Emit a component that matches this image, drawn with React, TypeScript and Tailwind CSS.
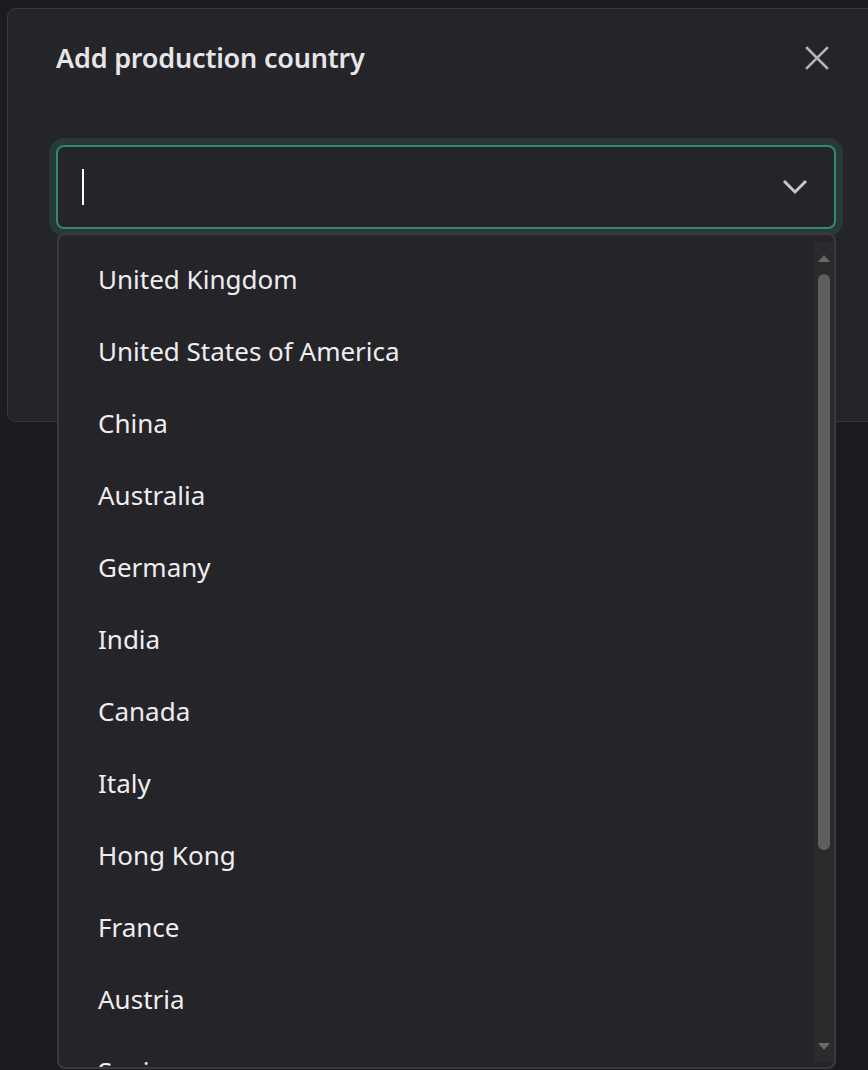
import React from "react";

const countries = [
  "United Kingdom",
  "United States of America",
  "China",
  "Australia",
  "Germany",
  "India",
  "Canada",
  "Italy",
  "Hong Kong",
  "France",
  "Austria",
  "Spain",
];

export default function App() {
  return (
    <div
      className="w-[868px] h-[1070px] overflow-hidden bg-[#1c1b20] relative"
      style={{ fontFamily: '"Noto Sans", "Open Sans", sans-serif' }}
    >
      <div className="ml-[7px] mt-[8px] w-[920px] h-[414px] rounded-[9px] border border-[#3a393e] bg-[#252429]">
        <div className="flex items-center justify-between w-[861px] pl-[48px] pr-[40px] pt-[32px]">
          <h2 className="text-[27px] leading-[34px] font-semibold text-[#e6e6e8] tracking-[-0.2px]">
            Add production country
          </h2>
          <svg width="24" height="24" viewBox="0 0 24 24" className="text-[#b4b4b8]">
            <path d="M2 2 L22 22 M22 2 L2 22" stroke="currentColor" strokeWidth="2.6" strokeLinecap="square" />
          </svg>
        </div>
        <div className="relative ml-[48px] mt-[70px] w-[780px]">
          <div className="h-[84px] rounded-[8px] border-2 border-[#2e8b6b] bg-[#252429] shadow-[0_0_0_7px_#283938] flex items-center justify-between pl-[24px] pr-[26px]">
            <div className="w-[2px] h-[36px] bg-white" />
            <svg width="26" height="16" viewBox="0 0 26 16" className="text-[#c6c6ca]">
              <path d="M2 2 L13 13 L24 2" stroke="currentColor" strokeWidth="3" fill="none" />
            </svg>
          </div>
          <div className="absolute left-[1px] top-[88px] w-[779px] h-[836px] rounded-[8px] border-2 border-[#3a393e] bg-[#252429] overflow-hidden flex">
            <div className="flex-1 pt-[8px]">
              {countries.map((c) => (
                <div key={c} className="h-[72px] flex items-center pl-[39px] text-[26px] text-[#eeeef0]">
                  {c}
                </div>
              ))}
            </div>
            <div className="mt-[7px] w-[20px] h-[820px] bg-[#2b2b2e] flex flex-col items-center">
              <div className="mt-[13px] w-0 h-0 border-l-[6px] border-r-[6px] border-b-[7px] border-l-transparent border-r-transparent border-b-[#6a6a6d]" />
              <div className="mt-[12px] w-[12px] h-[576px] rounded-full bg-[#5e5e61]" />
              <div className="mt-auto mb-[12px] w-0 h-0 border-l-[6px] border-r-[6px] border-t-[7px] border-l-transparent border-r-transparent border-t-[#6a6a6d]" />
            </div>
          </div>
        </div>
      </div>
    </div>
  );
}
